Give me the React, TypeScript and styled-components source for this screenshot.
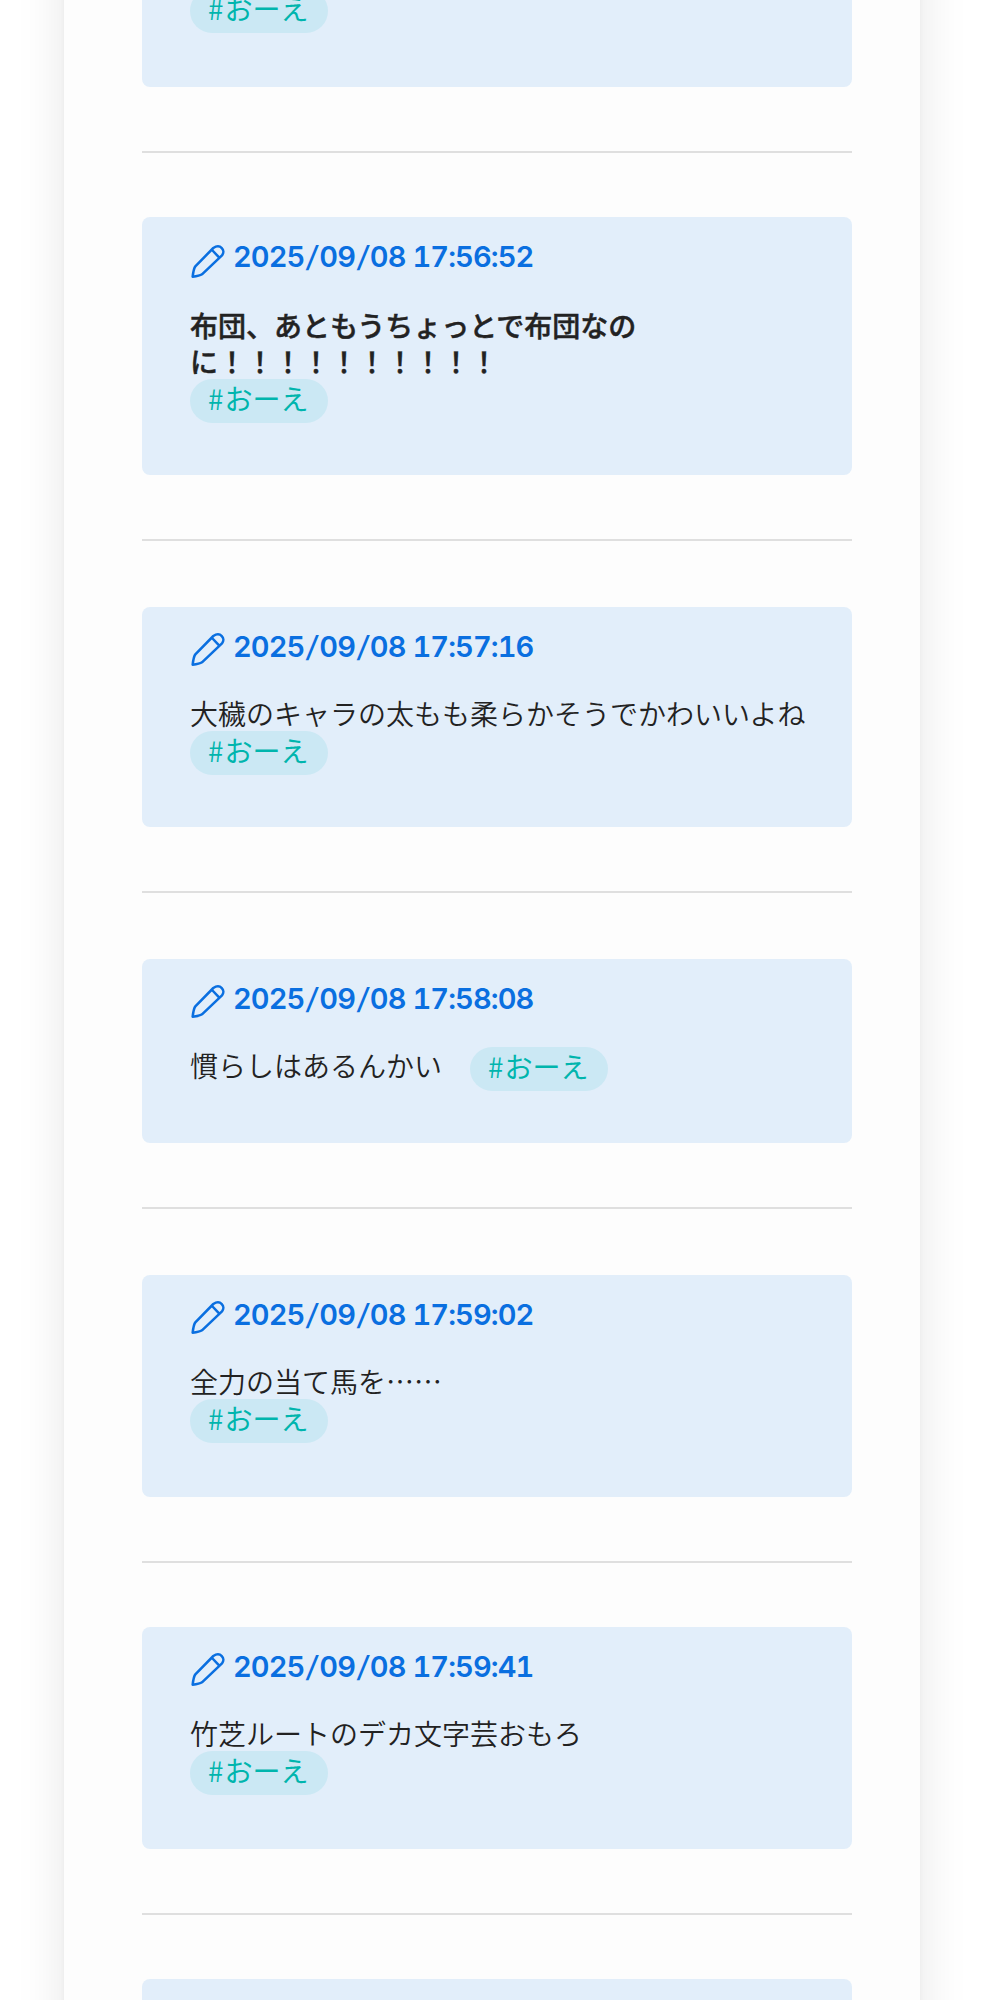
import React from "react";
import styled, { createGlobalStyle } from "styled-components";

const GlobalStyle = createGlobalStyle`
  html { background: #fff; }
  body {
    margin: 0;
    background: #fff;
    color: #222;
    font: 350 28px/36px "Noto Sans CJK JP", sans-serif;
    overflow: hidden;
  }
`;

const Page = styled.div`
  height: 2000px;
  overflow: hidden;
  display: flex;
`;

const Panel = styled.main`
  box-sizing: border-box;
  width: 856px;
  height: 2200px;
  margin: -100px 0 0 64px;
  padding: 100px 68px 0 78px;
  display: flex;
  flex-direction: column;
  background: #fdfdfd;
  box-shadow: 0 0 4px rgba(0, 0, 0, 0.04), 0 0 46px rgba(0, 0, 0, 0.1);
`;

const Card = styled.article<{ $height: number; $end?: boolean }>`
  box-sizing: border-box;
  flex: none;
  display: flex;
  flex-direction: column;
  justify-content: ${(p) => (p.$end ? "flex-end" : "flex-start")};
  height: ${(p) => p.$height}px;
  padding: ${(p) => (p.$end ? "0 48px 54px" : "22px 48px 0")};
  border-radius: ${(p) => (p.$end ? "0 0 8px 8px" : "8px")};
  background: #e2eefa;
`;

const Divider = styled.hr<{ $after: number }>`
  flex: none;
  width: 100%;
  height: 2px;
  margin: 64px 0 ${(p) => p.$after}px;
  border: 0;
  background: #dfdfdf;
`;

const Stamp = styled.a`
  display: flex;
  flex: none;
  height: 36px;
  color: #0a6fe0;
  font: 600 29px/36px Inter, "Noto Sans", sans-serif;
  font-variant-numeric: tabular-nums;
  letter-spacing: -0.9px;
  white-space: nowrap;
`;

const Slash = styled.span`
  display: inline-block;
  margin: 0 2px 0 3px;
  font-weight: 500;
  transform: skewX(-8deg);
`;

const Pencil = styled.svg<{ $drop: number }>`
  flex: none;
  width: 36px;
  height: 36px;
  margin: ${(p) => p.$drop}px 7px 0 0;
  fill: none;
  stroke: currentColor;
  stroke-width: 7.6;
  stroke-linecap: round;
  stroke-linejoin: round;
`;

const Body = styled.div<{ $inline?: boolean; $strong?: boolean }>`
  display: flex;
  flex-direction: ${(p) => (p.$inline ? "row" : "column")};
  align-items: flex-start;
  gap: ${(p) => (p.$inline ? 28 : 0)}px;
  margin-top: ${(p) => (p.$strong ? 32 : 30)}px;
`;

const Message = styled.p<{ $strong?: boolean }>`
  margin: 0;
  font-weight: ${(p) => (p.$strong ? 500 : 350)};
  -webkit-text-stroke: ${(p) => (p.$strong ? "0.45px #222" : "0")};
  white-space: nowrap;
`;

const Tag = styled.a`
  box-sizing: border-box;
  flex: none;
  width: 138px;
  height: 44px;
  padding-left: 18px;
  border-radius: 22px;
  background: #cbe8f4;
  color: #00b5ad;
  font-weight: 400;
  line-height: 39px;
  white-space: nowrap;
`;

const Hash = styled.span`
  letter-spacing: 1px;
  font-weight: 350;
`;

type Post = {
  time: string;
  lines: string[];
  height: number;
  after: number;
  strong?: boolean;
  inline?: boolean;
};

const posts: Post[] = [
  { time: "2025/09/08 17:56:52", lines: ["布団、あともうちょっとで布団なの", "に！！！！！！！！！！"], height: 258, after: 66, strong: true },
  { time: "2025/09/08 17:57:16", lines: ["大穢のキャラの太もも柔らかそうでかわいいよね"], height: 220, after: 66 },
  { time: "2025/09/08 17:58:08", lines: ["慣らしはあるんかい"], height: 184, after: 66, inline: true },
  { time: "2025/09/08 17:59:02", lines: ["全力の当て馬を……"], height: 222, after: 64 },
  { time: "2025/09/08 17:59:41", lines: ["竹芝ルートのデカ文字芸おもろ"], height: 222, after: 64 },
];

const HashTag = () => (
  <Tag>
    <Hash>#</Hash>おーえ
  </Tag>
);

const TimeText = ({ value }: { value: string }) => (
  <time>
    {value.split("/").map((part, i) => (
      <React.Fragment key={i}>
        {i > 0 && <Slash>/</Slash>}
        {part}
      </React.Fragment>
    ))}
  </time>
);

const PostCard = ({ post }: { post: Post }) => (
  <Card $height={post.height}>
    <Stamp>
      <Pencil viewBox="180 100 108 108" $drop={post.strong ? 4.7 : 2.7}>
        <path d="M250 112 196 167Q191 173 188 198Q209 196 216 191L276 134C288 120 271 97 250 112ZM249 121 265 138" />
      </Pencil>
      <TimeText value={post.time} />
    </Stamp>
    <Body $inline={post.inline} $strong={post.strong}>
      <Message $strong={post.strong}>
        {post.lines.map((line, i) => (
          <React.Fragment key={line}>
            {i > 0 && <br />}
            {line}
          </React.Fragment>
        ))}
      </Message>
      <HashTag />
    </Body>
  </Card>
);

export default function App() {
  return (
    <Page lang="ja">
      <GlobalStyle />
      <Panel>
        <Card $height={87} $end>
          <HashTag />
        </Card>
        <Divider $after={64} />
        {posts.map((post) => (
          <React.Fragment key={post.time}>
            <PostCard post={post} />
            <Divider $after={post.after} />
          </React.Fragment>
        ))}
        <Card $height={220} />
      </Panel>
    </Page>
  );
}
